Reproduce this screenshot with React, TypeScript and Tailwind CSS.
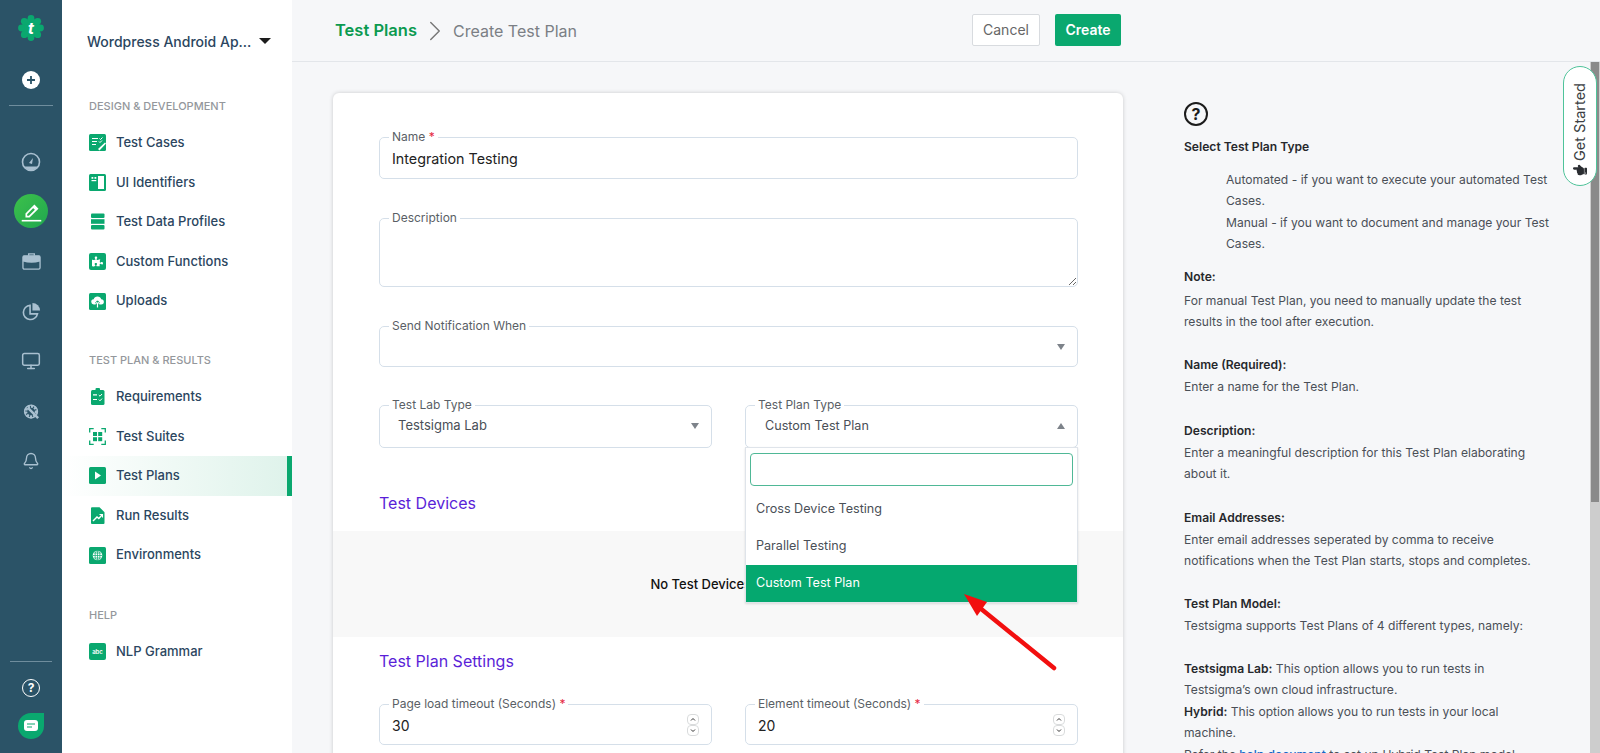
import { ReactNode } from 'react';
import { Bell, ChevronRight, Monitor } from 'lucide-react';
import { FaHandPointLeft, FaPuzzlePiece } from 'react-icons/fa';

const G = '#0aa86f';

function IconBox({ children }: { children: ReactNode }) {
  return (
    <svg viewBox="0 0 17 17" className="w-[17px] h-[17px] shrink-0">
      <rect x="0" y="0" width="17" height="17" rx="1.5" fill={G} />
      {children}
    </svg>
  );
}

const navIcons: Record<string, ReactNode> = {
  cases: (
    <IconBox>
      <path d="M3 4.5h6M3 7.5h5M3 10.5h4" stroke="#fff" strokeWidth="1.2" />
      <path d="M10.5 4.5l1 1 2-2M10 7.5l1 1 2-2" stroke="#fff" strokeWidth="1" fill="none" />
      <path d="M9 15l7-6.5 1 1-6.5 7z" fill="#fff" />
    </IconBox>
  ),
  ui: (
    <IconBox>
      <rect x="9" y="2" width="6" height="13" fill="#fff" />
      <rect x="2.5" y="3" width="1.8" height="1.8" fill="#fff" />
      <rect x="5.5" y="3" width="1.8" height="1.8" fill="#fff" />
      <rect x="2.5" y="6" width="4.8" height="1.2" fill="#fff" />
    </IconBox>
  ),
  data: (
    <svg viewBox="0 0 17 17" className="w-[17px] h-[17px] shrink-0">
      <rect x="2" y="0.5" width="13.5" height="4.6" rx="1" fill={G} />
      <rect x="2" y="6.2" width="13.5" height="4.6" fill={G} />
      <rect x="2" y="12" width="13.5" height="4.6" rx="1" fill={G} />
    </svg>
  ),
  puzzle: (
    <span className="w-[17px] h-[17px] shrink-0 rounded-[2px] bg-[#0aa86f] flex items-center justify-center">
      <FaPuzzlePiece className="text-white w-[11px] h-[11px]" />
    </span>
  ),
  upload: (
    <IconBox>
      <path d="M5 11.5a2.6 2.6 0 01-.3-5.2 3.9 3.9 0 017.5 0 2.6 2.6 0 01.1 5.2h-2v-1h-3.6v1z" fill="#fff" />
      <path d="M8.5 14V8M6.5 9.8l2-2 2 2" stroke={G} strokeWidth="1" fill="none" />
      <path d="M8.5 14.5v-5" stroke="#fff" strokeWidth="1.2" />
    </IconBox>
  ),
  req: (
    <svg viewBox="0 0 17 17" className="w-[17px] h-[17px] shrink-0">
      <rect x="2" y="2" width="13.5" height="15" rx="1.5" fill={G} />
      <rect x="6.5" y="0" width="4.5" height="3.5" rx="1" fill={G} />
      <path d="M4 6.8h4M4 11.5h4" stroke="#fff" strokeWidth="1.2" />
      <path d="M9.8 7l1.2 1.2 2-2.2M9.8 11.6l1.2 1.2 2-2.2" stroke="#fff" strokeWidth="1" fill="none" />
    </svg>
  ),
  suites: (
    <svg viewBox="0 0 17 17" className="w-[17px] h-[17px] shrink-0">
      <path d="M.7 4.5V.7h4M12.3.7h4v3.8M16.3 12.5v3.8h-4M4.7 16.3h-4v-3.8" stroke={G} strokeWidth="1.3" fill="none" />
      <rect x="4" y="4" width="4" height="4" fill={G} />
      <rect x="9.2" y="4" width="4" height="4" fill={G} />
      <rect x="4" y="9.2" width="4" height="4" fill={G} />
      <rect x="9.2" y="9.2" width="4" height="4" fill={G} />
    </svg>
  ),
  plans: (
    <IconBox>
      <path d="M6 4.5l6 4-6 4z" fill="#fff" />
    </IconBox>
  ),
  results: (
    <svg viewBox="0 0 17 17" className="w-[17px] h-[17px] shrink-0">
      <path d="M2 1.2A1 1 0 013 .2h7.5l5 5V16a1 1 0 01-1 1H3a1 1 0 01-1-1z" fill={G} />
      <path d="M4 14l4-4 1.8 1.5L13 8" stroke="#fff" strokeWidth="1.4" fill="none" />
      <path d="M10.5 7.5H13.5V10.5" stroke="#fff" strokeWidth="1.1" fill="none" />
    </svg>
  ),
  env: (
    <IconBox>
      <circle cx="8.5" cy="8.5" r="4.8" fill="#fff" />
      <path d="M3.7 8.5h9.6M8.5 3.7v9.6M4.6 6h7.8M4.6 11h7.8" stroke={G} strokeWidth=".7" />
      <ellipse cx="8.5" cy="8.5" rx="2.4" ry="4.8" stroke={G} strokeWidth=".7" fill="none" />
    </IconBox>
  ),
  nlp: (
    <span className="w-[17px] h-[17px] shrink-0 rounded-[2px] bg-[#0aa86f] flex items-center justify-center text-white text-[6px] leading-none font-semibold">
      abc
    </span>
  ),
};

function NavItem({ icon, label, active }: { icon: string; label: string; active?: boolean }) {
  return (
    <div
      className={`h-[39.6px] flex items-center gap-[10px] pl-[27px] ${
        active ? 'bg-gradient-to-r from-white to-[#dff3eb] border-r-[5px] border-[#0aa86f]' : ''
      }`}
    >
      {navIcons[icon]}
      <span className="text-[13px] text-[#2b4660] font-medium">{label}</span>
    </div>
  );
}

function NavHeading({ children, className }: { children: ReactNode; className: string }) {
  return (
    <div className={`pl-[27px] h-4 leading-4 mb-[9px] text-[11px] text-[#94979c] font-medium ${className}`}>
      {children}
    </div>
  );
}

function Rail() {
  const muted = '#a9c0d0';
  return (
    <div className="w-[62px] shrink-0 bg-[#2b5367] flex flex-col items-center relative">
      <svg viewBox="0 0 26 26" className="w-[26px] h-[26px] mt-[15px]">
        <circle cx="13" cy="13" r="9.5" fill={G} />
        {[0, 45, 90, 135, 180, 225, 270, 315].map(a => (
          <circle
            key={a}
            cx={13 + 9.5 * Math.cos((a * Math.PI) / 180)}
            cy={13 + 9.5 * Math.sin((a * Math.PI) / 180)}
            r="3.4"
            fill={G}
          />
        ))}
        <text x="13" y="19" textAnchor="middle" fontSize="16" fontWeight="700" fontStyle="italic" fontFamily="Inter, sans-serif" fill="#fff">
          t
        </text>
      </svg>
      <svg viewBox="0 0 18 18" className="w-[18px] h-[18px] mt-[30px]">
        <circle cx="9" cy="9" r="9" fill="#fff" />
        <path d="M9 5v8M5 9h8" stroke="#2b5367" strokeWidth="1.8" />
      </svg>
      <div className="w-[44px] h-px bg-[#6f8d9d] mt-4" />
      <svg viewBox="0 0 20 20" className="w-[20px] h-[20px] mt-[46px]">
        <circle cx="10" cy="10" r="8.5" stroke={muted} strokeWidth="1.6" fill="none" />
        <path d="M3 14.5h14a8.5 8.5 0 01-14 0z" fill={muted} />
        <path d="M8 11l4-5-1 6z" fill={muted} />
      </svg>
      <div className="w-[34px] h-[34px] rounded-full bg-gradient-to-br from-[#3cc14a] to-[#1fa74f] flex items-center justify-center mt-[22px]">
        <svg viewBox="0 0 20 20" className="w-[23px] h-[23px]">
          <path d="M5.5 12l7-7 2.5 2.5-7 7H5.5zM11.5 6l2.5 2.5" stroke="#fff" strokeWidth="1.5" fill="none" />
          <path d="M1.5 18h17" stroke="#fff" strokeWidth="1.4" />
        </svg>
      </div>
      <svg viewBox="0 0 20 20" className="w-[19px] h-[19px] mt-[24px]">
        <path d="M7 4V2h6v2" stroke={muted} strokeWidth="1.4" fill="none" />
        <rect x="1" y="4" width="18" height="14" rx="1.5" fill="none" stroke={muted} strokeWidth="1.4" />
        <path d="M1 4h18v6a30 30 0 01-18 0z" fill={muted} />
      </svg>
      <svg viewBox="0 0 20 20" className="w-[19px] h-[19px] mt-[31px]">
        <path d="M8.5 3.5a7.5 7.5 0 107.8 9H8.5z" stroke={muted} strokeWidth="1.7" fill="none" />
        <path d="M11 1a8 8 0 018 8h-8z" fill={muted} />
      </svg>
      <Monitor className="w-[20px] h-[20px] mt-[30px] text-[#a9c0d0]" strokeWidth={1.8} />
      <svg viewBox="0 0 20 20" className="w-[19px] h-[19px] mt-[31px]">
        <circle cx="9.5" cy="10" r="5.5" stroke={muted} strokeWidth="3" strokeDasharray="2.4 1.2" fill="none" />
        <circle cx="9.5" cy="10" r="6.8" stroke={muted} strokeWidth="1.4" fill="none" />
        <path d="M6 6l11 11" stroke={muted} strokeWidth="2.6" />
      </svg>
      <Bell className="w-[18px] h-[18px] mt-[31px] text-[#a9c0d0]" strokeWidth={1.8} />
      <div className="flex-1" />
      <div className="w-[42px] h-px bg-[#6f8d9d] mb-[17px]" />
      <div className="w-[18px] h-[18px] rounded-full border-[1.5px] border-white text-white text-[12px] font-bold flex items-center justify-center mb-[16px]">
        ?
      </div>
      <div className="w-[26px] h-[26px] rounded-full rounded-tr-[4px] bg-[#0aa86f] flex items-center justify-center mb-[14px]">
        <svg viewBox="0 0 14 12" className="w-[14px] h-[12px]">
          <rect width="14" height="11" rx="3" fill="#fff" />
          <path d="M3 4h8M3 7h5" stroke={G} strokeWidth="1.2" />
        </svg>
      </div>
    </div>
  );
}

function SideNav() {
  return (
    <div className="w-[230px] shrink-0 bg-white flex flex-col">
      <div className="mt-[30px] h-[22px] pl-[25px] flex items-center gap-[8px] text-[14px] text-[#2b4660] font-medium">
        <span>Wordpress Android Ap...</span>
        <span className="w-0 h-0 border-x-[6px] border-x-transparent border-t-[6px] border-t-[#1c1c1c]" />
      </div>
      <NavHeading className="mt-[46px]">DESIGN &amp; DEVELOPMENT</NavHeading>
      <NavItem icon="cases" label="Test Cases" />
      <NavItem icon="ui" label="UI Identifiers" />
      <NavItem icon="data" label="Test Data Profiles" />
      <NavItem icon="puzzle" label="Custom Functions" />
      <NavItem icon="upload" label="Uploads" />
      <NavHeading className="mt-[31px]">TEST PLAN &amp; RESULTS</NavHeading>
      <NavItem icon="req" label="Requirements" />
      <NavItem icon="suites" label="Test Suites" />
      <NavItem icon="plans" label="Test Plans" active />
      <NavItem icon="results" label="Run Results" />
      <NavItem icon="env" label="Environments" />
      <NavHeading className="mt-[32px]">HELP</NavHeading>
      <NavItem icon="nlp" label="NLP Grammar" />
    </div>
  );
}

function Field({ label, required, className, children }: { label: string; required?: boolean; className?: string; children: ReactNode }) {
  return (
    <fieldset className={`relative border border-[#d5dfe9] rounded-[5px] pl-[9px] min-w-0 ${className ?? ''}`}>
      <legend className="px-[3px] text-[12px] leading-4 text-[#5a5f66]">
        {label}
        {required && <span className="text-[#e5263f]"> *</span>}
      </legend>
      {children}
    </fieldset>
  );
}

function Caret({ up }: { up?: boolean }) {
  return (
    <span
      className={`w-0 h-0 border-x-[4px] border-x-transparent ${
        up ? 'border-b-[6px] border-b-[#7d838a]' : 'border-t-[6px] border-t-[#7d838a]'
      }`}
    />
  );
}

function Stepper() {
  return (
    <div className="w-[12px] h-[22px] flex flex-col shrink-0">
      <svg viewBox="0 0 12 11" className="w-[12px] h-[11px]">
        <rect x=".5" y=".5" width="11" height="10" rx="3.5" fill="#fff" stroke="#d9dbdc" />
        <path d="M4 6.5l2-2 2 2" stroke="#333" fill="none" />
      </svg>
      <svg viewBox="0 0 12 11" className="w-[12px] h-[11px]">
        <rect x=".5" y=".5" width="11" height="10" rx="3.5" fill="#fff" stroke="#d9dbdc" />
        <path d="M4 4.5l2 2 2-2" stroke="#333" fill="none" />
      </svg>
    </div>
  );
}

function NumberField({ label, value }: { label: string; value: string }) {
  return (
    <Field label={label} required>
      <div className="h-[26px] mb-[6px] flex items-center pl-[3px] pr-[12px] text-[14px] text-[#222]">
        <span className="flex-1">{value}</span>
        <Stepper />
      </div>
    </Field>
  );
}

function FormCard() {
  return (
    <div className="w-[790px] mt-[31px] bg-white rounded-t-[6px] shadow-[0_0_4px_rgba(0,0,0,0.18)] pt-[36px] pb-10">
      <div className="pl-[46px] pr-[45px]">
        <Field label="Name" required>
          <input
            readOnly
            defaultValue="Integration Testing"
            className="block w-full h-[26px] mb-[7px] pl-[3px] pr-3 text-[14.3px] text-[#222] outline-none"
          />
        </Field>
        <Field label="Description" className="mt-[31px]">
          <textarea className="block w-full h-[60px] pl-[3px] text-[14px] outline-none resize-y" />
        </Field>
        <Field label="Send Notification When" className="mt-[31px]">
          <div className="h-[26px] mb-[6px] flex items-center justify-end pr-[12px]">
            <Caret />
          </div>
        </Field>
        <div className="grid grid-cols-2 gap-[33px] mt-[30px]">
          <Field label="Test Lab Type">
            <div className="h-[26px] mb-[8px] flex items-center justify-between pl-[9px] pr-[12px] text-[13px] text-[#4a4f57]">
              <span>Testsigma Lab</span>
              <Caret />
            </div>
          </Field>
          <Field label="Test Plan Type" className="z-10">
            <div className="h-[26px] mb-[8px] flex items-center justify-between pl-[10px] pr-[12px] text-[12.6px] text-[#4a4f57]">
              <span>Custom Test Plan</span>
              <Caret up />
            </div>
            <div className="absolute -left-px -right-px top-full h-[156px] bg-white border border-[#dfe4ea] shadow-[0_1px_2px_rgba(0,0,0,0.12)] text-[12.6px] text-[#4a4f57]">
              <div className="h-[33px] mx-[4px] mt-[5px] border border-[#4fb896] rounded-[4px]" />
              <div className="h-[37px] mt-[5px] pl-[10px] flex items-center">Cross Device Testing</div>
              <div className="h-[37px] pl-[10px] flex items-center">Parallel Testing</div>
              <div className="h-[37px] pl-[10px] flex items-center bg-[#05a86f] text-white">Custom Test Plan</div>
            </div>
          </Field>
        </div>
        <h3 className="mt-[43px] text-[16px] leading-6 text-[#5a1fd8]">Test Devices</h3>
      </div>
      <div className="mt-4 h-[106px] bg-[#f8f8f8] flex items-center justify-center pr-[10px] pt-[2px] text-[13px] font-medium text-[#111]">
        No Test Devices Added
      </div>
      <div className="pl-[46px] pr-[45px]">
        <h3 className="mt-[12px] text-[16px] leading-6 text-[#5a1fd8]">Test Plan Settings</h3>
        <div className="grid grid-cols-2 gap-[33px] mt-[23px]">
          <NumberField label="Page load timeout (Seconds)" value="30" />
          <NumberField label="Element timeout (Seconds)" value="20" />
        </div>
      </div>
    </div>
  );
}

function HelpHead({ children, className }: { children: ReactNode; className?: string }) {
  return <div className={`font-semibold leading-[23px] text-[#26282c] ${className ?? ''}`}>{children}</div>;
}

function HelpPanel() {
  return (
    <div className="w-[366px] ml-[61px] pt-[40px] text-[12.1px] leading-[21.4px] text-[#4a4f57] shrink-0">
      <div className="w-[24px] h-[24px] rounded-full border-2 border-[#1c1c1c] text-[#1c1c1c] text-[16px] leading-none font-bold flex items-center justify-center">
        ?
      </div>
      <HelpHead className="mt-[9px]">Select Test Plan Type</HelpHead>
      <div className="pl-[42px] mt-[11px]">
        <p>Automated - if you want to execute your automated Test Cases.</p>
        <p>Manual - if you want to document and manage your Test Cases.</p>
      </div>
      <HelpHead className="mt-[10px]">Note:</HelpHead>
      <p className="mt-[2px]">For manual Test Plan, you need to manually update the test results in the tool after execution.</p>
      <HelpHead className="mt-[21px]">Name (Required):</HelpHead>
      <p>Enter a name for the Test Plan.</p>
      <HelpHead className="mt-[21px]">Description:</HelpHead>
      <p>Enter a meaningful description for this Test Plan elaborating about it.</p>
      <HelpHead className="mt-[21px]">Email Addresses:</HelpHead>
      <p>Enter email addresses seperated by comma to receive notifications when the Test Plan starts, stops and completes.</p>
      <HelpHead className="mt-[21px]">Test Plan Model:</HelpHead>
      <p>Testsigma supports Test Plans of 4 different types, namely:</p>
      <p className="mt-[21px]">
        <b className="font-semibold text-[#26282c]">Testsigma Lab:</b> This option allows you to run tests in Testsigma’s own cloud infrastructure.
      </p>
      <p>
        <b className="font-semibold text-[#26282c]">Hybrid:</b> This option allows you to run tests in your local machine.
      </p>
      <p>
        Refer the <span className="font-medium text-[#1668c7]">help document</span> to set up Hybrid Test Plan model.
      </p>
    </div>
  );
}

export default function App() {
  return (
    <div className="relative w-[1600px] h-[753px] overflow-hidden flex font-['Inter',sans-serif]">
      <Rail />
      <SideNav />
      <div className="flex-1 min-w-0 bg-[#f6f7f9] flex flex-col">
        <div className="h-[62px] shrink-0 border-b border-[#e3e6ea] pl-[43px] flex items-center">
          <div className="w-[786px] flex items-center justify-between">
            <div className="flex items-center text-[16px]">
              <span className="text-[16.5px] font-semibold text-[#0b9a50]">Test Plans</span>
              <ChevronRight className="w-[34px] h-[34px] mx-[1px] text-[#777]" strokeWidth={1} />
              <span className="text-[#7b7f85]">Create Test Plan</span>
            </div>
            <div className="flex items-center gap-[15px] text-[14px] mb-[2px]">
              <button type="button" className="w-[68px] h-[32px] bg-white border border-[#d8dbdf] rounded-[2px] text-[#666]">
                Cancel
              </button>
              <button type="button" className="w-[66px] h-[32px] bg-[#0aa86f] rounded-[2px] text-white font-semibold">
                Create
              </button>
            </div>
          </div>
        </div>
        <div className="flex-1 min-h-0 flex overflow-hidden">
          <div className="pl-[41px] shrink-0">
            <FormCard />
          </div>
          <HelpPanel />
          <div className="flex-1" />
          <div className="w-[10px] shrink-0 bg-[#cdcdcd]">
            <div className="h-[440px] mx-[1px] bg-[#8a8a8a]" />
          </div>
        </div>
      </div>

      {/* Get Started tab */}
      <div className="absolute z-20 left-[1563px] top-[66px] w-[34px] h-[120px] bg-white border border-[#4fc39a] rounded-[17px] flex flex-col items-center pt-[16px] gap-[2px]">
        <span className="[writing-mode:vertical-rl] rotate-180 text-[14.5px] leading-none text-[#3c3f44]">Get Started</span>
        <FaHandPointLeft className="w-[14px] h-[14px] text-[#2a2d31]" />
      </div>

      {/* annotation arrow */}
      <svg viewBox="0 0 100 82" className="absolute z-20 left-[960px] top-[590px] w-[100px] h-[82px]">
        <path d="M94 78L20 18" stroke="#f20f0f" strokeWidth="4.5" strokeLinecap="round" />
        <path d="M4 4L27 12L17 26z" fill="#f20f0f" />
      </svg>
    </div>
  );
}
